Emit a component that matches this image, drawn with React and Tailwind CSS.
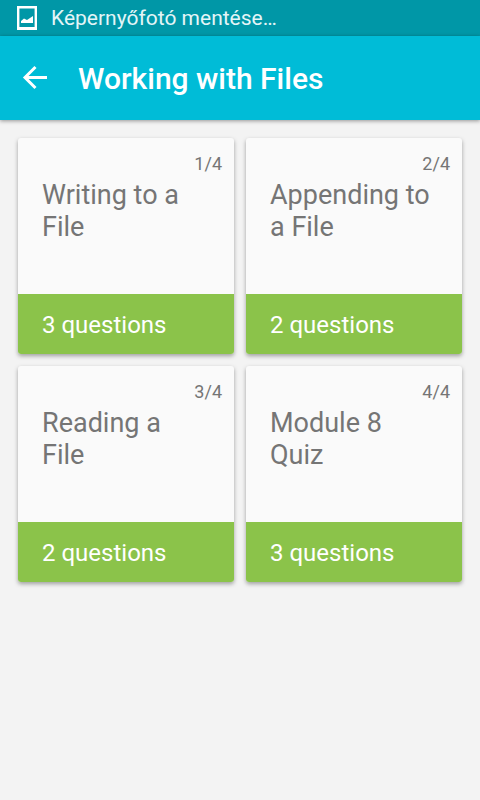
const lessons = [
  { title: 'Writing to a File', questions: 3 },
  { title: 'Appending to a File', questions: 2 },
  { title: 'Reading a File', questions: 2 },
  { title: 'Module 8 Quiz', questions: 3 },
];

function StatusBar() {
  return (
    <div className="flex h-9 items-center gap-[13px] bg-[#0097a7] px-4 text-white">
      <svg width="22" height="24" viewBox="0 0 22 24" fill="currentColor" aria-hidden="true">
        <path fillRule="evenodd" d="M1 0h20v24H1zM3.400 2.400v18.600h15.200V2.400z" />
        <path d="M5 17v-2l3-2.500 3 1.500 3-2 3-2V17z" />
      </svg>
      <span className="text-[21px] leading-6 text-[#e3f5f7]">Képernyőfotó mentése…</span>
    </div>
  );
}

function AppBar({ title }) {
  return (
    <header className="relative flex h-21 items-center gap-7 bg-[#00bcd7] px-5 text-white shadow-[0_1px_4px_rgba(0,0,0,0.4)]">
      <button type="button" aria-label="Back">
        <svg width="30" height="30" viewBox="0 0 30 30" fill="none" stroke="currentColor" strokeWidth="3">
          <path d="M27 14.500H6M15.500 4L5 14.500l10.500 10.500" />
        </svg>
      </button>
      <h1 className="pt-0.5 text-3xl font-medium">{title}</h1>
    </header>
  );
}

function LessonCard({ lesson, position, total }) {
  return (
    <button
      type="button"
      className="flex h-54 flex-col overflow-hidden rounded-[3px] bg-[#fafafa] text-left shadow-[0_2px_4px_rgba(0,0,0,0.35)]"
    >
      <span className="w-full px-3 pt-3.5 text-right text-lg leading-6 text-[#757575]">
        {position}/{total}
      </span>
      <span className="w-full flex-1 pt-[3px] pr-7 pl-6 text-[27px] leading-8 text-[#757575]">
        {lesson.title}
      </span>
      <span className="flex h-15 w-full items-center bg-[#8bc34a] px-6 pt-0.5 text-2xl text-white">
        {lesson.questions} questions
      </span>
    </button>
  );
}

export default function App() {
  return (
    <div className="min-h-screen bg-[#f3f3f3] font-[Roboto,sans-serif]">
      <StatusBar />
      <AppBar title="Working with Files" />
      <main className="grid grid-cols-2 gap-3 p-[18px]">
        {lessons.map((lesson, i) => (
          <LessonCard
            key={lesson.title}
            lesson={lesson}
            position={i + 1}
            total={lessons.length}
          />
        ))}
      </main>
    </div>
  );
}
